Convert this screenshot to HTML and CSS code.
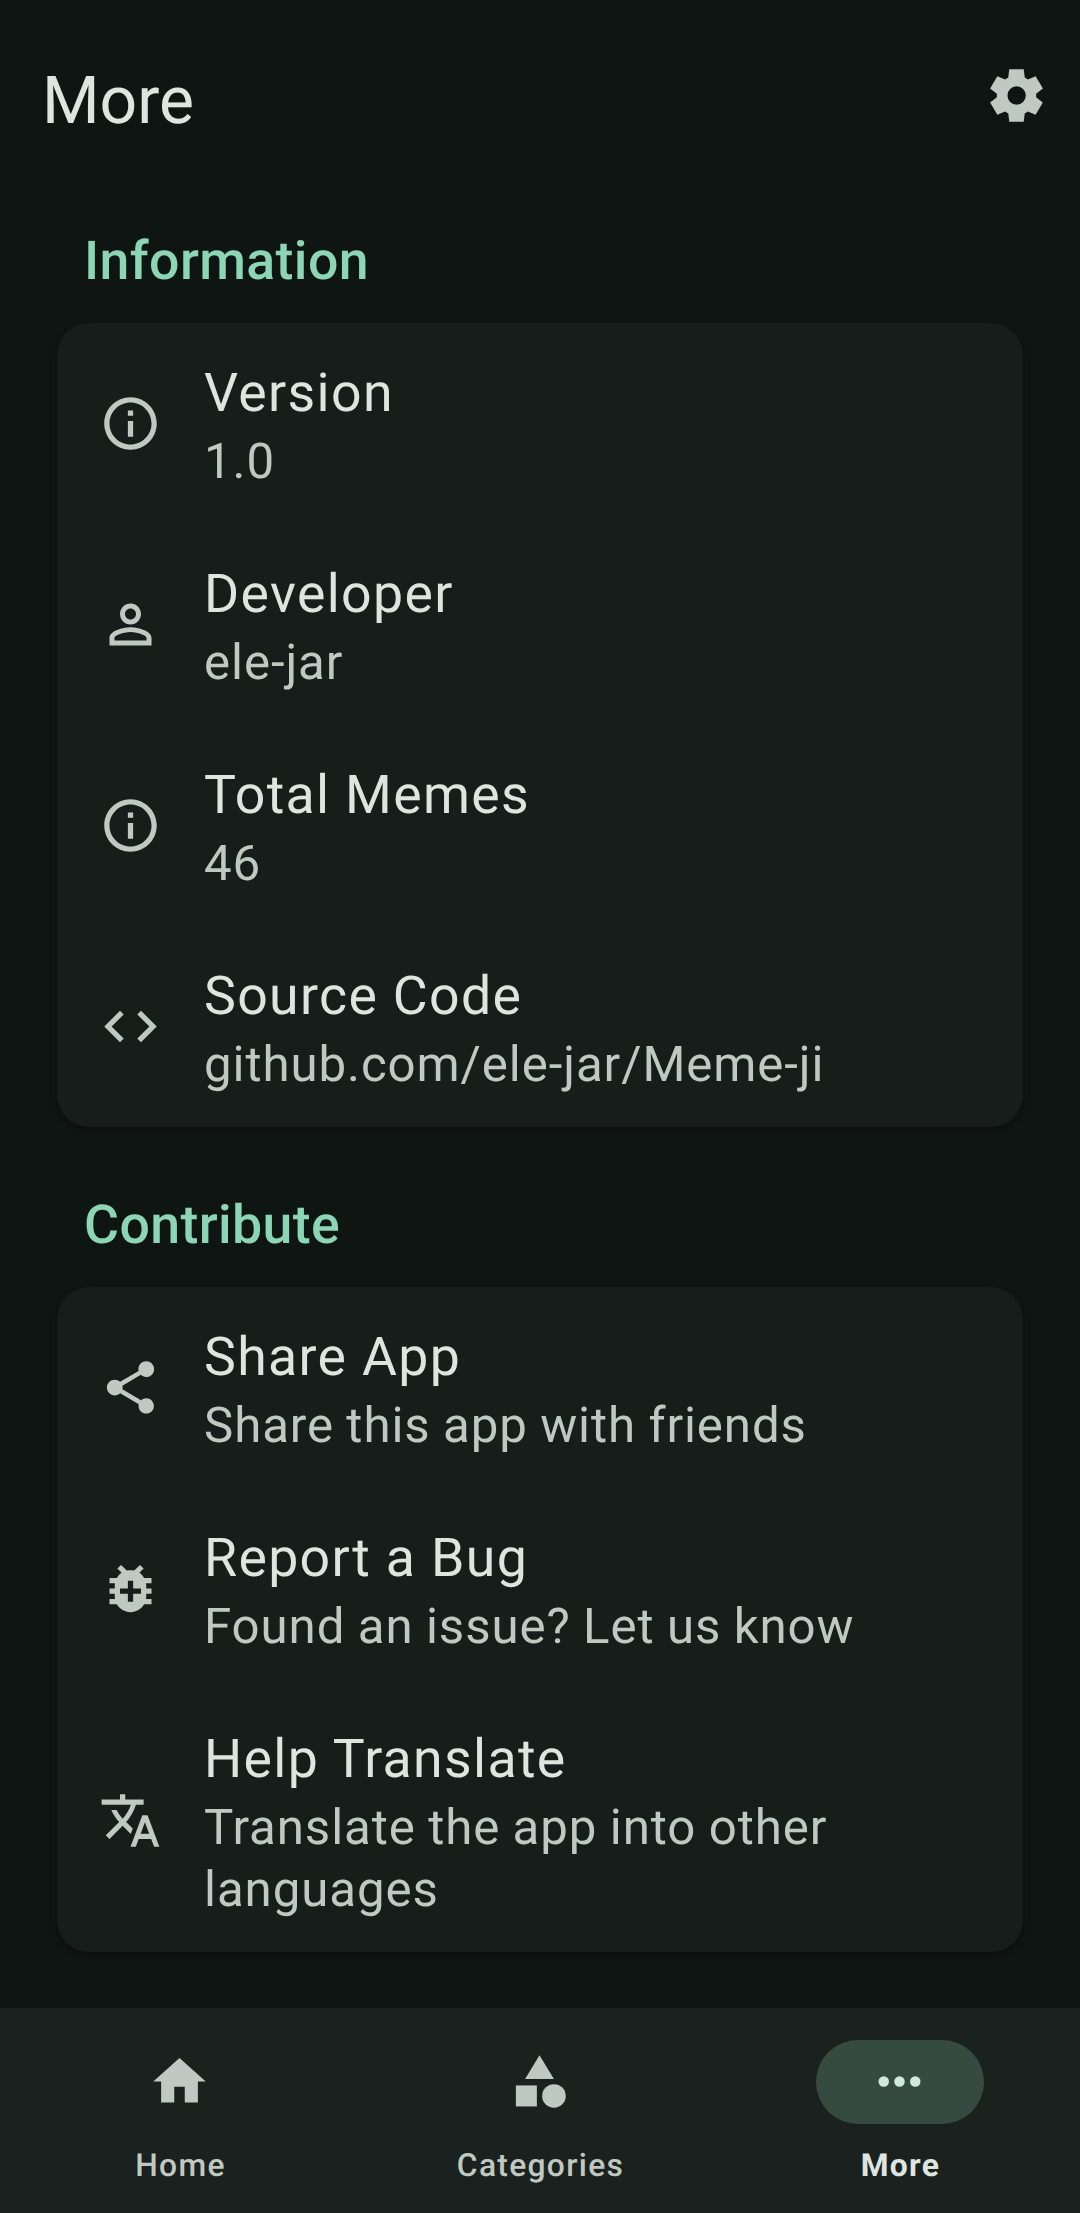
FILE: index.html
```html
<!DOCTYPE html>
<html lang="en">
<head>
<meta charset="utf-8">
<title>More</title>
<link rel="stylesheet" href="styles.css">
</head>
<body>
<div class="screen">
  <header class="topbar">
    <h1 class="topbar-title">More</h1>
    <svg class="icon" viewBox="0 -960 960 960"><path d="m370-80-16-128q-13-5-24.500-12T307-235l-119 50L78-375l103-78q-1-7-1-13.500v-27q0-6.500 1-13.500L78-585l110-190 119 50q11-8 23-15t24-12l16-128h220l16 128q13 5 24.500 12t22.500 15l119-50 110 190-103 78q1 7 1 13.500v27q0 6.500-2 13.500l103 78-110 190-118-50q-11 8-23 15t-24 12L590-80H370Zm112-260q58 0 99-41t41-99q0-58-41-99t-99-41q-59 0-99.500 41T342-480q0 58 40.500 99t99.500 41Z"/></svg>
  </header>
  <main class="content">
    <h2 class="section-title">Information</h2>
    <section class="card">
      <div class="row">
        <svg class="icon" viewBox="0 0 24 24"><path d="M11 7h2v2h-2zm0 4h2v6h-2zm1-9C6.480 2 2 6.480 2 12s4.480 10 10 10 10-4.480 10-10S17.520 2 12 2zm0 18c-4.410 0-8-3.590-8-8s3.590-8 8-8 8 3.590 8 8-3.590 8-8 8z"/></svg>
        <div class="row-text"><div class="row-title">Version</div><div class="row-sub">1.0</div></div>
      </div>
      <div class="row">
        <svg class="icon" viewBox="0 0 24 24"><path d="M12 5.900c1.160 0 2.100.94 2.100 2.100s-.94 2.100-2.100 2.100S9.900 9.160 9.900 8s.94-2.100 2.100-2.100m0 9c2.970 0 6.100 1.460 6.100 2.100v1.100H5.900V17c0-.64 3.130-2.100 6.100-2.100M12 4C9.790 4 8 5.790 8 8s1.790 4 4 4 4-1.790 4-4-1.790-4-4-4zm0 9c-2.670 0-8 1.340-8 4v3h16v-3c0-2.660-5.330-4-8-4z"/></svg>
        <div class="row-text"><div class="row-title">Developer</div><div class="row-sub">ele-jar</div></div>
      </div>
      <div class="row">
        <svg class="icon" viewBox="0 0 24 24"><path d="M11 7h2v2h-2zm0 4h2v6h-2zm1-9C6.480 2 2 6.480 2 12s4.480 10 10 10 10-4.480 10-10S17.520 2 12 2zm0 18c-4.410 0-8-3.590-8-8s3.590-8 8-8 8 3.590 8 8-3.590 8-8 8z"/></svg>
        <div class="row-text"><div class="row-title">Total Memes</div><div class="row-sub">46</div></div>
      </div>
      <div class="row">
        <svg class="icon" viewBox="0 0 24 24"><path d="M9.400 16.600L4.800 12l4.600-4.600L8 6l-6 6 6 6 1.400-1.400zm5.200 0l4.600-4.600-4.600-4.600L16 6l6 6-6 6-1.400-1.400z"/></svg>
        <div class="row-text"><div class="row-title">Source Code</div><div class="row-sub">github.com/ele-jar/Meme-ji</div></div>
      </div>
    </section>
    <h2 class="section-title">Contribute</h2>
    <section class="card">
      <div class="row">
        <svg class="icon" viewBox="0 0 24 24"><path d="M18 16.080c-.76 0-1.440.3-1.960.77L8.910 12.700c.05-.23.09-.46.09-.7s-.04-.47-.09-.7l7.050-4.110c.54.5 1.250.81 2.040.81 1.660 0 3-1.340 3-3s-1.340-3-3-3-3 1.340-3 3c0 .24.04.47.09.7L8.040 9.810C7.500 9.310 6.790 9 6 9c-1.660 0-3 1.340-3 3s1.340 3 3 3c.79 0 1.500-.31 2.040-.81l7.120 4.160c-.05.21-.08.43-.08.65 0 1.610 1.310 2.920 2.920 2.920s2.920-1.310 2.920-2.920-1.310-2.920-2.920-2.920z"/></svg>
        <div class="row-text"><div class="row-title">Share App</div><div class="row-sub">Share this app with friends</div></div>
      </div>
      <div class="row">
        <svg class="icon" viewBox="0 0 24 24"><path fill-rule="evenodd" d="M20 8h-2.810c-.45-.78-1.070-1.450-1.820-1.960L17 4.410 15.590 3l-2.170 2.170C12.960 5.060 12.490 5 12 5c-.49 0-.96.06-1.410.17L8.410 3 7 4.410l1.620 1.630C7.880 6.550 7.260 7.220 6.810 8H4v2h2.090c-.05.33-.09.66-.09 1v1H4v2h2v1c0 .34.04.67.09 1H4v2h2.810c1.040 1.790 2.970 3 5.190 3s4.150-1.210 5.190-3H20v-2h-2.090c.05-.33.09-.66.09-1v-1h2v-2h-2v-1c0-.34-.04-.67-.09-1H20V8zM16 14h-3v3h-2v-3H8v-2h3V9h2v3h3z"/></svg>
        <div class="row-text"><div class="row-title">Report a Bug</div><div class="row-sub">Found an issue? Let us know</div></div>
      </div>
      <div class="row">
        <svg class="icon" viewBox="0 0 24 24"><path d="M12.870 15.070l-2.540-2.510.03-.03c1.740-1.940 2.980-4.170 3.710-6.530H17V4h-7V2H8v2H1v1.990h11.170C11.500 7.920 10.440 9.750 9 11.350 8.070 10.320 7.300 9.190 6.690 8h-2c.73 1.630 1.730 3.170 2.980 4.560l-5.090 5.020L4 19l5-5 3.110 3.110.76-2.040zM18.500 10h-2L12 22h2l1.120-3h4.750L21 22h2l-4.500-12zm-2.620 7l1.620-4.330L19.120 17h-3.240z"/></svg>
        <div class="row-text"><div class="row-title">Help Translate</div><div class="row-sub">Translate the app into other languages</div></div>
      </div>
    </section>
  </main>
  <nav class="navbar">
    <div class="nav-item">
      <span class="pill"><svg class="icon" viewBox="0 0 24 24"><path d="M10 20v-6h4v6h5v-8h3L12 3 2 12h3v8z"/></svg></span>
      <span class="nav-label">Home</span>
    </div>
    <div class="nav-item">
      <span class="pill"><svg class="icon" viewBox="0 0 24 24"><path d="M12 2l-5.500 9h11z"/><circle cx="17.500" cy="17.500" r="4.500"/><path d="M3 13.500h8v8H3z"/></svg></span>
      <span class="nav-label">Categories</span>
    </div>
    <div class="nav-item active">
      <span class="pill"><svg class="icon" viewBox="0 0 24 24"><circle cx="6" cy="12" r="2"/><circle cx="12" cy="12" r="2"/><circle cx="18" cy="12" r="2"/></svg></span>
      <span class="nav-label">More</span>
    </div>
  </nav>
</div>
</body>
</html>
```
FILE: styles.css
```css
* { box-sizing: border-box; }
body {
  margin: 0;
  background: #0f1512;
  color: #dee4df;
  font-family: Roboto, "Liberation Sans", sans-serif;
  text-rendering: geometricPrecision;
}
.screen {
  width: 1080px;
  height: 2213px;
  display: flex;
  flex-direction: column;
  overflow: hidden;
}
.icon {
  display: block;
  width: 63px;
  height: 63px;
  flex: none;
  fill: #bfc9c1;
}
.topbar {
  height: 190px;
  flex: none;
  display: flex;
  justify-content: space-between;
  align-items: flex-start;
  padding: 64px 32px 0 42px;
}
.topbar-title {
  margin: -2px 0 0;
  font-size: 66px;
  font-weight: 400;
  line-height: 80px;
}
.content {
  flex: 1;
  padding: 0 57px;
}
.section-title {
  height: 133px;
  margin: 0;
  padding: 36px 0 0 27px;
  font-size: 53.600px;
  font-weight: 500;
  line-height: 72px;
  letter-spacing: 0.390px;
  color: #8cd5b5;
}
.section-title:not(:first-child) { height: 160px; padding-top: 63px; }
.card {
  background: #171d1a;
  border-radius: 32px;
  box-shadow: 0 3px 7px rgba(0, 0, 0, 0.3);
}
.row {
  display: flex;
  align-items: center;
  gap: 42px;
  padding: 0 42px;
}
.row-text { padding: 35px 0 31px; }
.row-title {
  margin-bottom: 1px;
  font-size: 53.600px;
  line-height: 72px;
  letter-spacing: 1.350px;
}
.row-sub {
  font-size: 49.200px;
  line-height: 62px;
  letter-spacing: 0.920px;
  word-spacing: -0.700px;
  color: #bfc9c1;
}
.navbar {
  height: 205px;
  flex: none;
  display: flex;
  padding-top: 32px;
  background: #1b211e;
}
.nav-item {
  flex: 1;
  display: flex;
  flex-direction: column;
  align-items: center;
}
.pill {
  width: 168px;
  height: 84px;
  display: flex;
  align-items: center;
  justify-content: center;
  border-radius: 42px;
}
.pill .icon { margin: 0 1px 1px 0; }
.nav-label {
  margin-top: 20px;
  padding-left: 1px;
  font-size: 31.800px;
  font-weight: 500;
  line-height: 42px;
  letter-spacing: 1.300px;
  color: #bfc9c1;
}
.active .pill { background: #354b40; }
.active .icon { fill: #cfe9da; }
.active .nav-label { color: #dee4df; font-weight: 700; }
```
